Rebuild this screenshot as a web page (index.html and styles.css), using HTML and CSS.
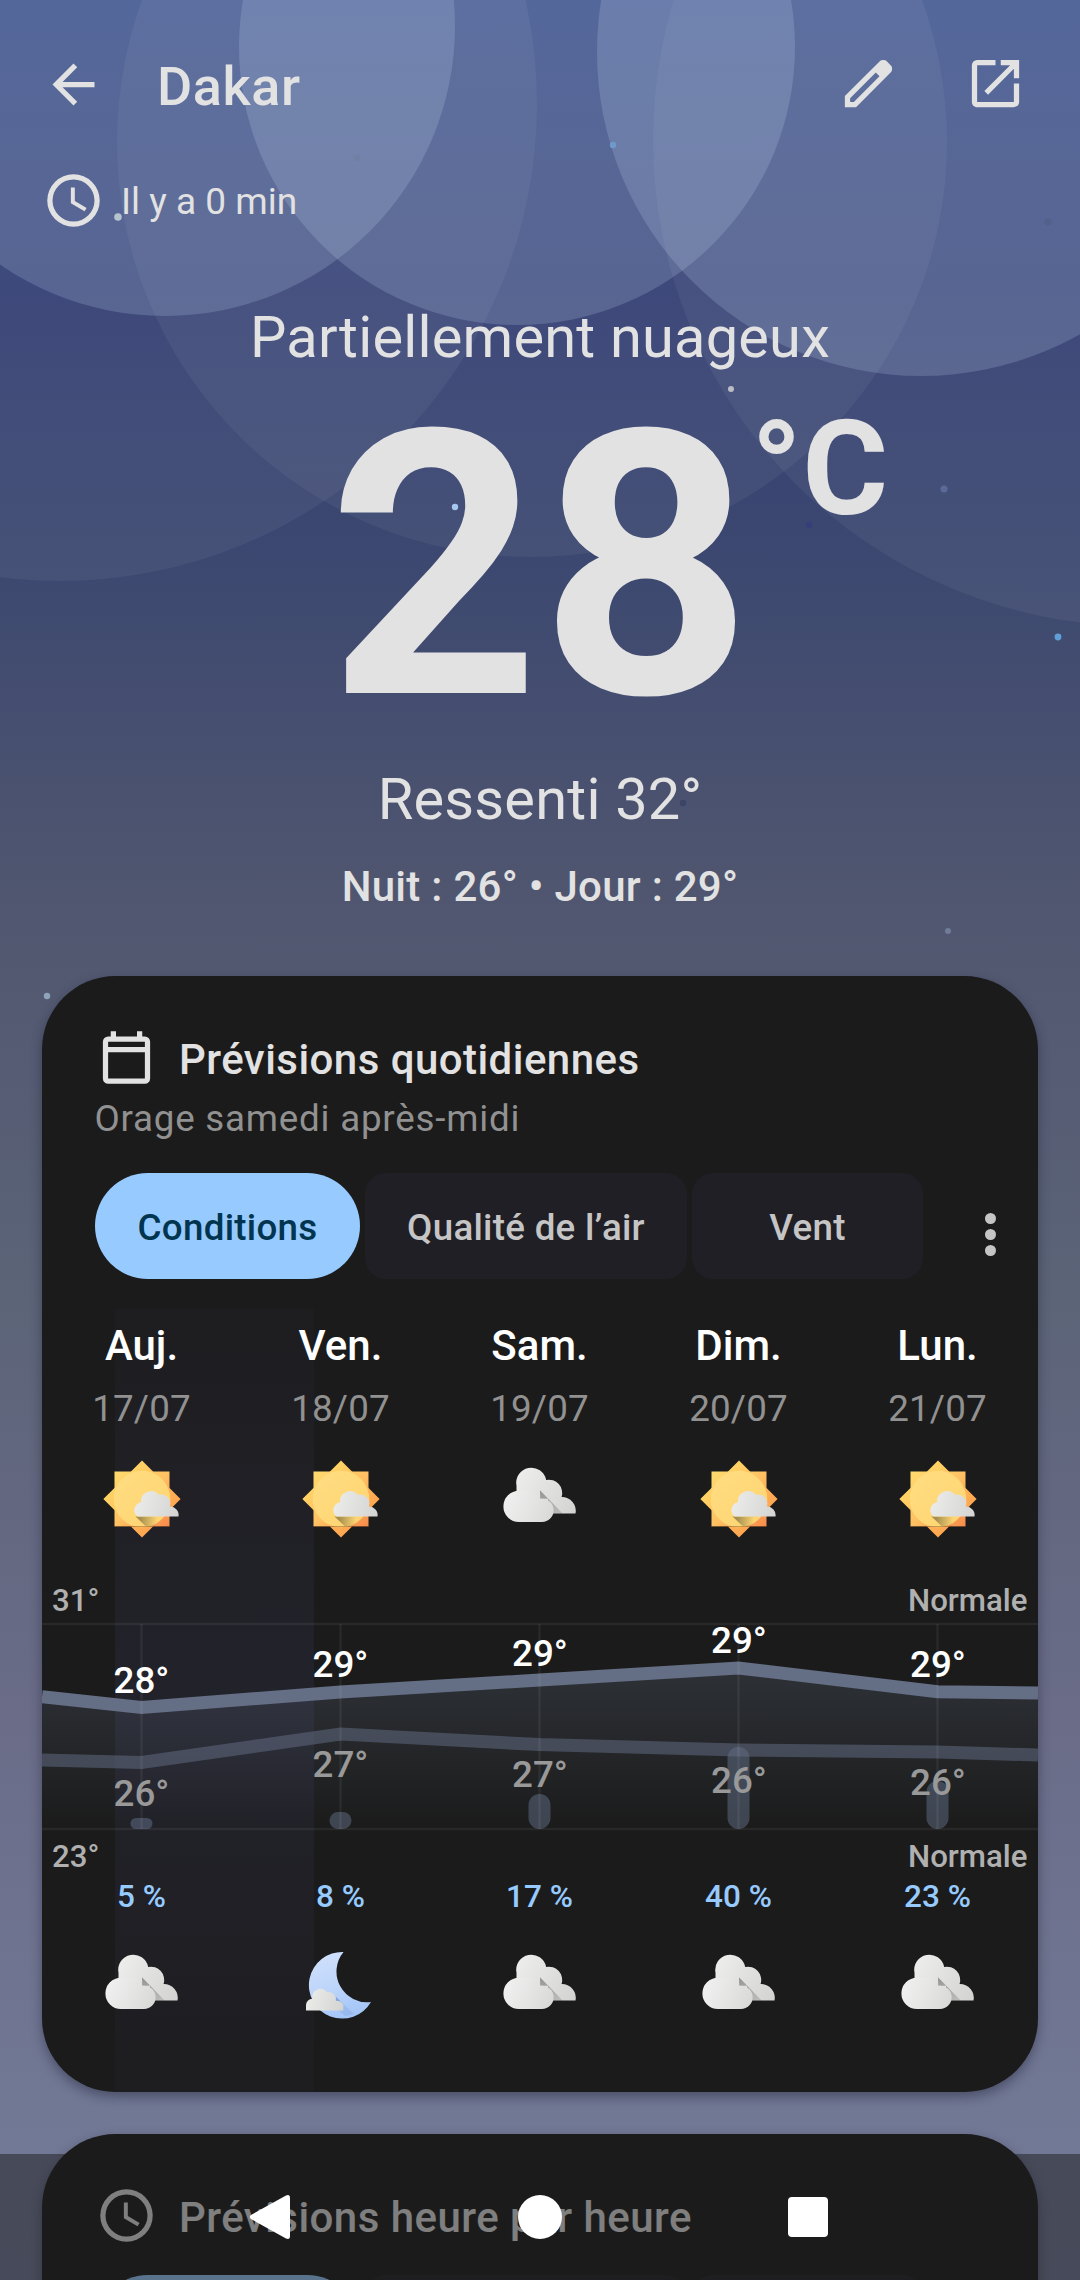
FILE: index.html
```
<!DOCTYPE html>
<html lang="fr">
<head>
<meta charset="utf-8">
<title>Dakar</title>
<link rel="stylesheet" href="styles.css">
</head>
<body>
<svg class="defs" width="0" height="0" aria-hidden="true">
  <defs>
    <linearGradient id="ray" gradientUnits="userSpaceOnUse" x1="-28" y1="-28" x2="28" y2="28">
      <stop offset="0" stop-color="#ffdb6e"/><stop offset=".5" stop-color="#ffc163"/><stop offset="1" stop-color="#f78a4a"/>
    </linearGradient>
    <linearGradient id="ray2" gradientUnits="userSpaceOnUse" x1="-20" y1="-20" x2="20" y2="20">
      <stop offset="0" stop-color="#ffd466"/><stop offset="1" stop-color="#ffa550"/>
    </linearGradient>
    <linearGradient id="disc" gradientUnits="userSpaceOnUse" x1="-20" y1="-20" x2="20" y2="20">
      <stop offset="0" stop-color="#ffdc80"/><stop offset="1" stop-color="#ffd572"/>
    </linearGradient>
    <linearGradient id="puff" gradientUnits="userSpaceOnUse" x1="-9" y1="4" x2="36" y2="16">
      <stop offset="0" stop-color="#ececea"/><stop offset="1" stop-color="#d4d5d2"/>
    </linearGradient>
    <linearGradient id="puff-small" gradientUnits="userSpaceOnUse" x1="-35" y1="10" x2="2" y2="22">
      <stop offset="0" stop-color="#ececea"/><stop offset="1" stop-color="#d4d5d2"/>
    </linearGradient>
    <linearGradient id="front" gradientUnits="userSpaceOnUse" x1="-34" y1="-2" x2="14" y2="18">
      <stop offset="0" stop-color="#f0f0f0"/><stop offset="1" stop-color="#d8d9d7"/>
    </linearGradient>
    <linearGradient id="back" gradientUnits="userSpaceOnUse" x1="-20" y1="-24" x2="36" y2="10">
      <stop offset="0" stop-color="#ececeb"/><stop offset="1" stop-color="#d3d4d1"/>
    </linearGradient>
    <linearGradient id="fold" gradientUnits="userSpaceOnUse" x1="0" y1="-8" x2="20" y2="14">
      <stop offset="0" stop-color="#000" stop-opacity=".34"/><stop offset="1" stop-color="#000" stop-opacity=".13"/>
    </linearGradient>
    <linearGradient id="moon" gradientUnits="userSpaceOnUse" x1="-15" y1="-34" x2="10" y2="34">
      <stop offset="0" stop-color="#cfe0fb"/><stop offset=".5" stop-color="#bdd5fa"/><stop offset="1" stop-color="#a0c3f7"/>
    </linearGradient>
    <linearGradient id="shade" gradientUnits="userSpaceOnUse" x1="-2" y1="22" x2="15" y2="24">
      <stop offset="0" stop-color="#5c5430" stop-opacity=".55"/><stop offset="1" stop-color="#5c5430" stop-opacity="0"/>
    </linearGradient>
    <symbol id="sun-cloud" viewBox="-40 -40 80 80">
      <path d="M0-38.6 38.6 0 0 38.6-38.6 0Z" fill="url(#ray2)"/>
      <path d="M-27.5-27.5h55v55h-55z" fill="url(#ray)"/>
      <circle r="28.3" fill="url(#disc)"/>
      <path d="M-27.5 27h55v1h-55z" fill="#4a2c12" fill-opacity=".35"/>
      <path d="M-6.5 17.500H16V27H3.500Z" fill="url(#shade)"/>
      <path d="M-4.5 17.5A8 8 0 0 1-1 3.3A10.2 10.2 0 0 1 17-4.2A9 9 0 0 1 27.8 7.6A8.5 8.5 0 0 1 36.5 17.5Z" fill="url(#puff)"/>
    </symbol>
    <symbol id="cloud" viewBox="-40 -40 80 80">
      <path d="M-23.500-6V-13.300A15.100 15.100 0 0 1 6.200-19A13.300 13.300 0 0 1 21.600-2A13.800 13.800 0 0 1 35.500 14.600H-10Z" fill="url(#back)"/>
      <path d="M0-8.800 22.700 14.600H8V-.3H.2Z" fill="url(#fold)"/>
      <path d="M-21 23A15.600 15.600 0 0 1-21-8.200H-6L.2-.3H2A11.650 11.650 0 0 1 2 23Z" fill="url(#front)"/>
    </symbol>
    <symbol id="moon-cloud" viewBox="-40 -40 80 80">
      <path d="M2.5-34A33.3 33.3 0 1 0 30 16A30.7 30.7 0 0 1 2.5-34Z" fill="url(#moon)"/>
      <path d="M-5 11 13 28 4 30-3 24Z" fill="#4d76b8" fill-opacity=".16"/>
      <path d="M-5 11 1 17H-5Z" fill="#4d76b8" fill-opacity=".4"/>
      <path d="M-35 24.4V19.5A6.5 6.5 0 0 1-28.6 12.8A8.3 8.3 0 0 1-14 6A7.5 7.5 0 0 1-5.5 15A6 6 0 0 1 2.2 22V24.4Z" fill="url(#puff-small)"/>
    </symbol>
    <symbol id="clock" viewBox="0 0 24 24">
      <path d="M12 2a10 10 0 1 0 0 20 10 10 0 0 0 0-20zm0 18a8 8 0 1 1 0-16 8 8 0 0 1 0 16zm.5-13H11v6l5.2 3.1.8-1.2-4.500-2.700z"/>
    </symbol>
  </defs>
</svg>

<svg class="sky" viewBox="0 0 1080 2280" aria-hidden="true">
  <g fill="#fff" fill-opacity=".05">
    <circle cx="60" cy="104" r="477"/><circle cx="532" cy="142" r="415"/><circle cx="1139" cy="140" r="486"/>
  </g>
  <g fill="#c4d6f2" fill-opacity=".2">
    <circle cx="165" cy="26" r="290"/><circle cx="517" cy="47" r="278"/><circle cx="921" cy="52" r="324"/>
  </g>
  <circle cx="118" cy="217" r="3.8" fill="#b5c4cc"/>
  <circle cx="357" cy="158" r="3" fill="#6f80a2"/>
  <circle cx="613" cy="145" r="3.200" fill="#6e9acb"/>
  <circle cx="1048" cy="222" r="3.500" fill="#50628c"/>
  <circle cx="731" cy="389" r="3" fill="#b9bfc4"/>
  <circle cx="455" cy="507" r="3.200" fill="#a5c8f0"/>
  <circle cx="944" cy="489" r="3.500" fill="#5a6a98"/>
  <circle cx="809" cy="525" r="3.200" fill="#35407a"/>
  <circle cx="1058" cy="637" r="3.400" fill="#5e9fd8"/>
  <circle cx="683" cy="803" r="3.200" fill="#3b4566"/>
  <circle cx="948" cy="931" r="3" fill="#6f7c98"/>
  <circle cx="47" cy="996" r="3.200" fill="#8fa3bb"/>
</svg>

<div class="screen">
  <header class="bar">
    <svg class="icon" viewBox="0 0 24 24"><path d="M20 11H7.830l5.590-5.590L12 4l-8 8 8 8 1.410-1.410L7.830 13H20z"/></svg>
    <h1 class="place">Dakar</h1>
    <svg class="icon action" viewBox="0 0 24 24"><path fill-rule="evenodd" d="M5 19h1.425L16.2 9.225 14.775 7.8 5 17.575V19Zm-2 2v-4.250L16.200 3.575q.3-.275.663-.425Q17.225 3 17.625 3q.4 0 .775.15t.65.45L20.425 5q.3.275.438.65.137.375.137.75 0 .4-.138.763-.137.362-.437.662L7.250 21Z"/></svg>
    <svg class="icon action" viewBox="0 0 24 24"><path d="M19 19H5V5h7V3H5a2 2 0 0 0-2 2v14c0 1.100.89 2 2 2h14c1.100 0 2-.9 2-2v-7h-2v7zM14 3v2h3.590l-9.830 9.830 1.410 1.410L19 6.410V10h2V3h-7z"/></svg>
  </header>

  <div class="updated">
    <svg class="icon"><use href="#clock"/></svg>
    <span class="ago">Il y a 0 min</span>
  </div>

  <section class="now">
    <p class="condition">Partiellement nuageux</p>
    <p class="temp"><span class="value">28<span class="unit">°C</span></span></p>
    <p class="feels">Ressenti 32°</p>
    <p class="range">Nuit : 26° • Jour : 29°</p>
  </section>

  <section class="card daily">
    <div class="today-band"></div>
    <div class="heading">
      <svg class="icon" viewBox="0 0 24 24"><path fill-rule="evenodd" d="M19 4h-1V2h-2v2H8V2H6v2H5a2 2 0 0 0-2 2v14a2 2 0 0 0 2 2h14a2 2 0 0 0 2-2V6a2 2 0 0 0-2-2zM5 6h14v2H5zM5 10h14v10H5z"/></svg>
      <h2 class="title">Prévisions quotidiennes</h2>
    </div>
    <p class="subtitle">Orage samedi après-midi</p>
    <div class="chips">
      <span class="chip on">Conditions</span><span class="chip air">Qualité de l’air</span><span class="chip wind">Vent</span>
      <span class="more"><i></i><i></i><i></i></span>
    </div>

    <div class="days">
      <div class="day"><b>Auj.</b><span>17/07</span><svg><use href="#sun-cloud"/></svg></div>
      <div class="day"><b>Ven.</b><span>18/07</span><svg><use href="#sun-cloud"/></svg></div>
      <div class="day"><b>Sam.</b><span>19/07</span><svg><use href="#cloud"/></svg></div>
      <div class="day"><b>Dim.</b><span>20/07</span><svg><use href="#sun-cloud"/></svg></div>
      <div class="day"><b>Lun.</b><span>21/07</span><svg><use href="#sun-cloud"/></svg></div>
    </div>

    <svg class="chart" viewBox="0 0 996 298">
      <defs>
        <linearGradient id="area" gradientUnits="userSpaceOnUse" x1="0" y1="88" x2="0" y2="249">
          <stop offset="0" stop-color="#6f7f98" stop-opacity=".22"/><stop offset="1" stop-color="#6f7f98" stop-opacity="0"/>
        </linearGradient>
      </defs>
      <path fill="url(#area)" d="M0 116.800 99.500 127.500 298.500 112 497.500 100 696.500 88 895.500 111.800 996 113V249H0Z"/>
      <path class="grid" d="M0 44H996M0 249H996"/>
      <g class="rain">
        <rect x="88.500" y="238" width="22" height="11" rx="5.500"/>
        <rect x="287.500" y="232" width="22" height="17" rx="8.500"/>
        <rect x="486.500" y="214" width="22" height="35" rx="11"/>
        <rect x="685.500" y="167" width="22" height="82" rx="11"/>
        <rect x="884.500" y="201" width="22" height="48" rx="11"/>
      </g>
      <path class="low" d="M0 180 99.500 182.500 298.500 154 497.500 164.600 696.500 170 895.500 172 996 175"/>
      <path class="high" d="M0 116.800 99.500 127.500 298.500 112 497.500 100 696.500 88 895.500 111.800 996 113"/>
      <path class="grid" d="M99.500 44V249M298.500 44V249M497.500 44V249M696.500 44V249M895.500 44V249"/>
      <g class="scale">
        <text x="10" y="31">31°</text><text x="985.500" y="31" text-anchor="end">Normale</text>
        <text x="10" y="287">23°</text><text x="985.500" y="287" text-anchor="end">Normale</text>
      </g>
      <g class="max">
        <text x="99.500" y="113">28°</text><text x="298.500" y="97">29°</text><text x="498" y="86">29°</text><text x="697" y="73">29°</text><text x="896" y="97">29°</text>
      </g>
      <g class="min">
        <text x="99.500" y="226">26°</text><text x="298.500" y="197">27°</text><text x="498" y="207">27°</text><text x="697" y="213">26°</text><text x="896" y="215">26°</text>
      </g>
    </svg>

    <div class="nights">
      <div class="night"><span>5 %</span><svg><use href="#cloud"/></svg></div>
      <div class="night"><span>8 %</span><svg><use href="#moon-cloud"/></svg></div>
      <div class="night"><span>17 %</span><svg><use href="#cloud"/></svg></div>
      <div class="night"><span>40 %</span><svg><use href="#cloud"/></svg></div>
      <div class="night"><span>23 %</span><svg><use href="#cloud"/></svg></div>
    </div>
  </section>

  <section class="card hourly">
    <div class="heading">
      <svg class="icon"><use href="#clock"/></svg>
      <h2 class="title">Prévisions heure par heure</h2>
    </div>
    <div class="chips">
      <span class="chip on"></span><span class="chip air"></span><span class="chip wind"></span>
    </div>
  </section>
</div>

<nav class="navbar">
  <svg viewBox="0 0 42 46"><path d="M37 1.500Q41 0 41 4V42Q41 46 37 44.500L2 25Q-.5 23 2 21Z"/></svg>
  <svg viewBox="0 0 44 44"><circle cx="22" cy="22" r="22"/></svg>
  <svg viewBox="0 0 40 40"><rect width="40" height="40" rx="4"/></svg>
</nav>
</body>
</html>
```
FILE: styles.css
```
* { box-sizing: border-box; }

body {
  margin: 0;
  position: relative;
  width: 1080px;
  height: 2280px;
  overflow: hidden;
  font-family: Roboto, "Liberation Sans", sans-serif;
  color: #e2e2e2;
  background: linear-gradient(#2f4380 0, #344074 290px, #3c4870 560px, #50566f 900px, #5c6478 1300px, #6a6c88 1720px, #717894 2100px, #737998 2280px);
}

h1, h2, p { margin: 0; }
svg { display: block; }
.defs { position: absolute; }
.sky { position: absolute; left: 0; top: 0; width: 1080px; height: 2280px; }

.icon { flex: none; width: 63px; height: 63px; fill: currentColor; }

.screen {
  position: relative;
  height: 2280px;
  overflow: hidden;
  display: flex;
  flex-direction: column;
}
.screen > * { flex: none; }

.bar {
  display: flex;
  align-items: center;
  height: 168px;
  padding: 0 53px 0 42px;
}
.place {
  flex: 1;
  padding: 4px 0 0 52px;
  font-size: 54px;
  font-weight: 500;
  letter-spacing: .6px;
}
.bar .action { margin-bottom: 1px; }
.action + .action { margin-left: 64px; }

.updated {
  display: flex;
  align-items: center;
  gap: 16px;
  padding-left: 42px;
  height: 65px;
}
.ago { padding-top: 2px; font-size: 37px; line-height: 44px; }

.now {
  display: flex;
  flex-direction: column;
  align-items: center;
  height: 743px;
  padding-top: 70px;
}
.condition, .feels { font-size: 57.750px; line-height: 68px; letter-spacing: .2px; }
.temp { margin-top: 8px; font-size: 369.500px; font-weight: 700; line-height: 376px; }
.value { position: relative; }
.unit {
  position: absolute;
  left: calc(100% - 1px);
  top: 42px;
  font-size: 131.250px;
  line-height: 154px;
}
.feels { margin-top: 10px; }
.range { margin-top: 29px; font-size: 42px; font-weight: 500; line-height: 50px; letter-spacing: .28px; }

.card {
  position: relative;
  margin: 0 42px 42px;
  padding-top: 50px;
  border-radius: 73.500px;
  background: #1b1b1b;
  box-shadow: 0 5px 12px rgba(20, 20, 40, .4);
  overflow: hidden;
}
.daily { height: 1116px; }
.hourly { height: 400px; }
.card > * { position: relative; }

.card > .today-band {
  position: absolute;
  left: 72.500px;
  top: 333px;
  bottom: 0;
  width: 199px;
  background: linear-gradient(rgba(60, 60, 100, .07), rgba(60, 60, 100, .22) 50%, rgba(60, 60, 100, .07));
}

.heading { display: flex; align-items: center; gap: 21px; padding-left: 53px; }
.title { padding-top: 4px; font-size: 42px; font-weight: 500; line-height: 50px; letter-spacing: .46px; }
.subtitle { margin-top: 8px; padding-left: 52.500px; font-size: 36.750px; line-height: 43px; letter-spacing: .77px; color: #919191; }

.chips { display: flex; gap: 5px; margin: 33px 0 0 53px; height: 106px; }
.hourly .chips { margin-top: 28px; }
.chip {
  display: flex;
  align-items: center;
  justify-content: center;
  width: 265px;
  padding-top: 2px;
  border-radius: 21px;
  font-size: 36.750px;
  font-weight: 500;
  letter-spacing: .27px;
  color: #c5c5c5;
  background: #201f25;
}
.chip.on { border-radius: 53px; background: #97cbff; color: #00344f; }
.chip.air { width: 322px; }
.chip.wind { width: 231px; }
.more {
  display: flex;
  flex-direction: column;
  justify-content: center;
  gap: 5px;
  margin-left: 57px;
  padding-top: 17px;
}
.more i { width: 11px; height: 11px; border-radius: 50%; background: #c5c5c5; }

.days, .nights { display: grid; grid-template-columns: repeat(5, 199px); }
.days { margin-top: 42px; }
.day, .night { display: flex; flex-direction: column; align-items: center; }
.day b { font-size: 42px; font-weight: 500; line-height: 50px; color: #fff; }
.day span { margin-top: 16px; font-size: 36.750px; line-height: 43px; letter-spacing: .1px; color: #919191; }
.day svg, .night svg { width: 80px; height: 80px; }
.day svg { margin-top: 29px; }

.chart { margin-top: 41px; width: 996px; height: 298px; }
.chart .grid { fill: none; stroke: #fff; stroke-opacity: .06; stroke-width: 2.500; }
.rain rect { fill: #8096b8; fill-opacity: .35; }
.high, .low { fill: none; stroke-width: 13; }
.high { stroke: #646e84; }
.low { stroke: #646e84; stroke-opacity: .52; }
.scale { font-size: 31.200px; font-weight: 500; fill: #b0b0b0; }
.max, .min { font-size: 36.750px; font-weight: 500; text-anchor: middle; }
.max { fill: #fff; }
.min { fill: #999; }

.night span { font-size: 31.500px; font-weight: 500; line-height: 38px; color: #97cbff; }
.night svg { margin-top: 30px; }

.navbar {
  position: absolute;
  left: 0;
  right: 0;
  bottom: 0;
  height: 126px;
  display: flex;
  align-items: center;
  background: rgba(27, 27, 27, .5);
}
.navbar svg { fill: #fff; }
.navbar svg:nth-child(1) { width: 42px; height: 46px; margin-left: 249px; }
.navbar svg:nth-child(2) { width: 44px; height: 44px; margin-left: 227px; }
.navbar svg:nth-child(3) { width: 40px; height: 40px; margin-left: 225.500px; }
```
